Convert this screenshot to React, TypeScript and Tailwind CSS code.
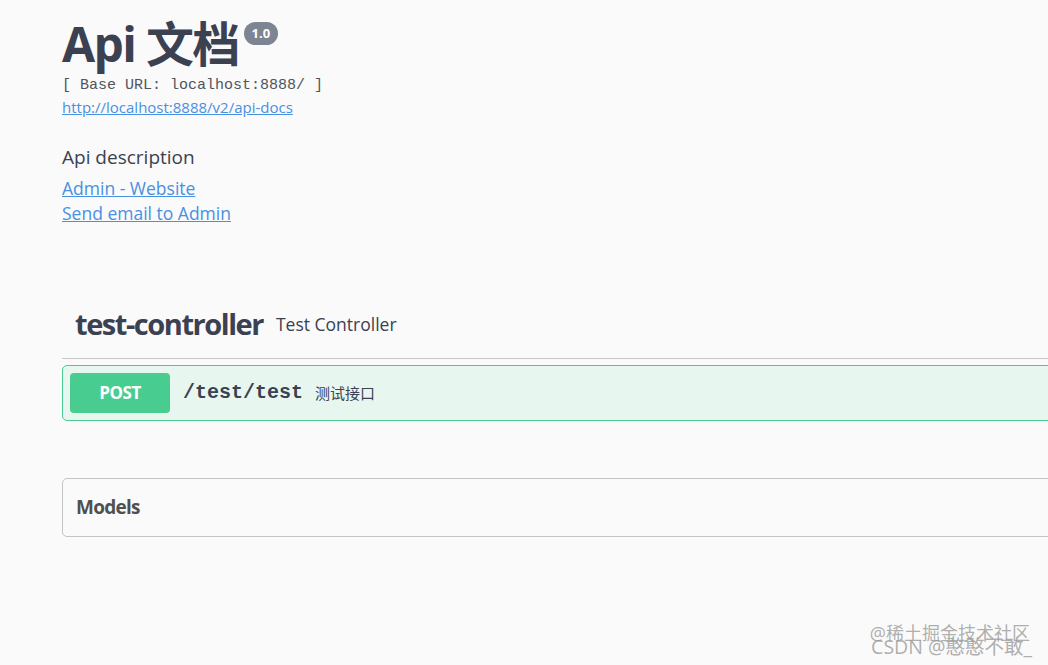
import React from "react";

const sans = "font-['Open_Sans','Noto_Sans_CJK_SC',sans-serif]";
const mono = "font-['Liberation_Mono','DejaVu_Sans_Mono',monospace]";

export default function App() {
  return (
    <div className={`relative w-[1048px] h-[665px] overflow-hidden bg-[#fafafa] text-[#3b4151] ${sans}`}>
      <div className="w-[1100px] pl-[62px]">
        {/* Info */}
        <div className="pt-[14px]">
          <div className="flex items-start">
            <h1 className="text-[48px] leading-[60px] font-bold tracking-[-0.035em]">Api 文档</h1>
            <span className="ml-[5px] mt-[8px] rounded-full bg-[#7d8492] px-[8px] text-[13px] leading-[23px] font-bold text-white">
              1.0
            </span>
          </div>
          <div className={`${mono} mt-[2px] text-[15px] leading-[20px] text-[#50555f]`}>[ Base URL: localhost:8888/ ]</div>
          <a href="#" className="-mt-[1px] block text-[15px] leading-[24px] text-[#4990e2] underline">
            http://localhost:8888/v2/api-docs
          </a>
          <div className="mt-[26px] text-[19px] leading-[24px]">Api description</div>
          <a href="#" className="mt-[7px] block text-[17.5px] leading-[25px] text-[#4990e2] underline">
            Admin - Website
          </a>
          <a href="#" className="block text-[17.5px] leading-[25px] text-[#4990e2] underline">
            Send email to Admin
          </a>
        </div>

        {/* Tag section */}
        <div className="mt-[78px]">
          <div className="flex items-center border-b border-[#c8c8c8] px-[13px] pb-[14px]">
            <span className="text-[29px] leading-[40px] font-bold tracking-[-0.05em]">test-controller</span>
            <span className="ml-[13px] text-[17.5px]">Test Controller</span>
          </div>
          <div className="mt-[6px] flex items-center rounded-[5px] border border-[#49cc90] bg-[#e8f6f0] p-[7px]">
            <span className="flex h-[40px] w-[100px] items-center justify-center rounded-[4px] bg-[#49cc90] text-[17px] font-bold text-white tracking-tight">
              POST
            </span>
            <span className={`${mono} ml-[13px] text-[20px] font-bold`}>/test/test</span>
            <span className="ml-[12px] text-[15px]">测试接口</span>
          </div>
        </div>

        {/* Models */}
        <div className="mt-[57px] flex h-[59px] items-center rounded-[5px] border border-[#c4c4c4] px-[13px]">
          <span className="text-[19px] font-bold text-[#505050] tracking-[-0.04em]">Models</span>
        </div>
      </div>

      {/* Watermark */}
      <div className="absolute right-[18px] top-[623px] whitespace-nowrap text-[18px] leading-[20px] text-[#9a9a9a]/80">
        @稀土掘金技术社区
      </div>
      <div className="absolute right-[16px] top-[636px] whitespace-nowrap text-[19.5px] leading-[22px] text-[#9a9a9a]/80">
        CSDN @憨憨不敢_
      </div>
    </div>
  );
}
